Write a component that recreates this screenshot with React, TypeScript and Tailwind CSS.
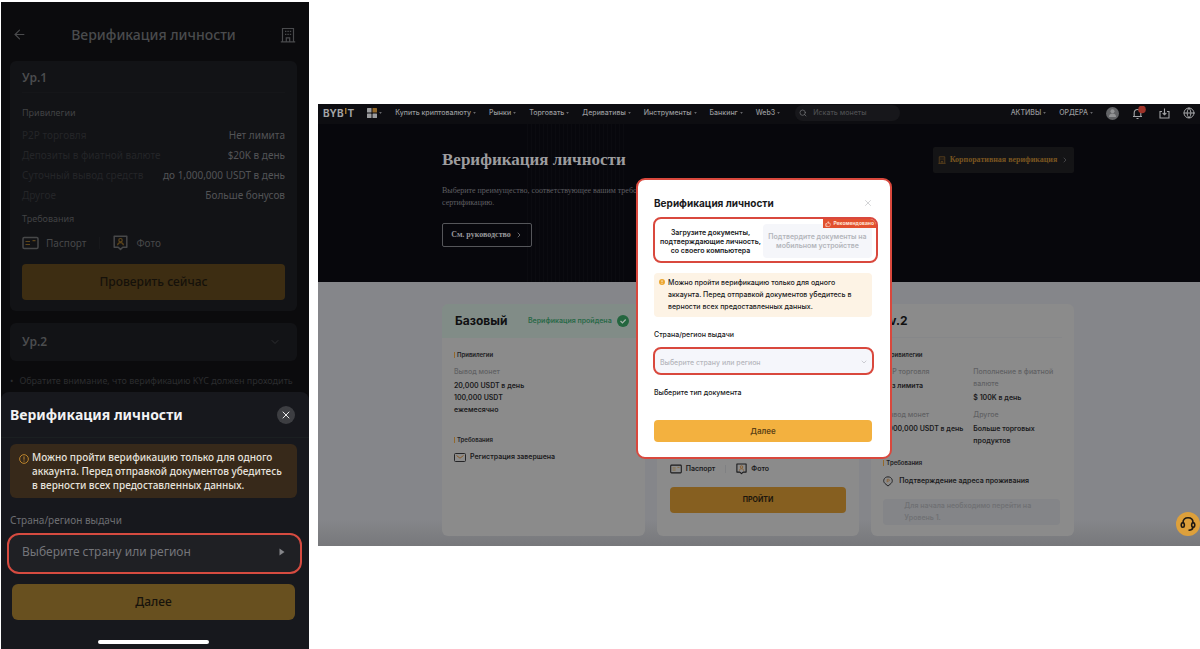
import type { ReactNode } from "react";
import { ArrowLeft, ChevronDown, ChevronRight, Globe, Search, ThumbsUp, X } from "lucide-react";

function BuildingIcon({ className }: { className: string }) {
  return (
    <svg viewBox="0 0 16 16" className={className} fill="none" stroke="currentColor" strokeWidth="1.2">
      <path d="M2.5 14.5V1.5h11v13M.8 14.8h14.4M6.3 14.5v-3.6h3.4v3.6" />
      <path d="M5 4.4h1.4M7.4 4.4h1.4M9.8 4.4h1.4M5 7.4h1.4M7.4 7.4h1.4M9.8 7.4h1.4" />
    </svg>
  );
}

function PassportIcon({ className, accent }: { className: string; accent: string }) {
  return (
    <svg viewBox="0 0 17 13" className={className} fill="none" stroke="currentColor" strokeWidth="1.5">
      <rect x="1" y="1" width="15" height="11" rx="1.2" />
      <path d="M3.5 5h4.5M3.5 8h4.5M10.5 4.2h3" stroke={accent} strokeWidth="1.2" />
    </svg>
  );
}

function PhotoIcon({ className, accent }: { className: string; accent: string }) {
  return (
    <svg viewBox="0 0 15 16" className={className} fill="none" stroke="currentColor" strokeWidth="1.5">
      <path d="M1.2 1.2h12.6v11H9.8L7.5 14.4 5.2 12.2h-4z" strokeLinejoin="round" />
      <circle cx="7.5" cy="5.2" r="1.7" stroke={accent} strokeWidth="1.2" />
      <path d="M4.6 10.2c.2-1.8 1.3-2.6 2.9-2.6s2.7.8 2.9 2.6" stroke={accent} strokeWidth="1.2" />
    </svg>
  );
}

const privileges = [
  ["P2P торговля", "Нет лимита"],
  ["Депозиты в фиатной валюте", "$20K в день"],
  ["Суточный вывод средств", "до 1,000,000 USDT в день"],
  ["Другое", "Больше бонусов"],
];

function Phone() {
  return (
    <section className="mt-0.5 ml-px flex w-[308px] shrink-0 flex-col bg-[#0b0b0d] font-['Noto_Sans','Open_Sans',sans-serif]">
      <header className="flex h-[59px] items-center justify-between pt-1.5 pr-[13px] pl-[11px] text-[#4a4b4d]">
        <button aria-label="Назад">
          <ArrowLeft className="size-[15px]" strokeWidth={1.8} />
        </button>
        <h1 className="text-sm font-medium">Верификация личности</h1>
        <button aria-label="Организация">
          <BuildingIcon className="size-4" />
        </button>
      </header>

      <div className="mr-3 ml-[9px] rounded-md bg-[#121316] px-3 pb-[11px]">
        <h2 className="flex h-8 items-center border-b border-[#151619] pt-0.5 text-xs font-semibold text-[#4b4c4e]">Ур.1</h2>
        <h3 className="mt-3 text-[9px] leading-4 text-[#414244]">Привилегии</h3>
        <dl className="mt-1 text-[10px] leading-5">
          {privileges.map(([name, value]) => (
            <div key={name} className="flex justify-between whitespace-nowrap">
              <dt className="text-[#242528]">{name}</dt>
              <dd className="text-[#535456]">{value}</dd>
            </div>
          ))}
        </dl>
        <h3 className="mt-1.5 text-[9px] leading-4 text-[#414244]">Требования</h3>
        <div className="mt-2 flex h-4 items-center text-[10px] text-[#474849]">
          <PassportIcon className="mr-[7px] h-3.5 w-[17px]" accent="#5f461a" />
          Паспорт
          <span className="mx-[13px] h-3 w-px bg-[#17181b]" />
          <PhotoIcon className="mr-2 h-4 w-[15px]" accent="#5f461a" />
          Фото
        </div>
        <button className="mt-[13px] h-9 w-full rounded-sm bg-[#3d2d12] text-xs font-medium text-[#15110a]">
          Проверить сейчас
        </button>
      </div>

      <button className="mt-3 mr-3 ml-[9px] flex h-[38px] items-center justify-between rounded-md bg-[#121316] px-3 text-xs font-semibold text-[#4b4c4e]">
        Ур.2
        <ChevronDown className="mr-1 size-3 text-[#2c2d30]" />
      </button>

      <p className="mr-3 ml-[9px] mt-3 h-[19px] text-[9px] leading-4 whitespace-nowrap text-[#2c2d2f]">
        <span className="mr-1.5">•</span>
        Обратите внимание, что верификацию KYC должен проходить
      </p>

      <div role="dialog" aria-labelledby="sheet-title" className="flex flex-1 flex-col rounded-t-lg bg-[#17181d] pr-3 pl-[9px]">
        <div className="-mr-3 -ml-[9px] flex h-[46px] items-center justify-between border-b border-[#1b1f21] pr-3.5 pl-[9px]">
          <h2 id="sheet-title" className="text-sm font-bold text-[#f2f2f3]">
            Верификация личности
          </h2>
          <button aria-label="Закрыть" className="grid size-[18px] place-items-center rounded-full bg-[#3d3e42] text-white">
            <X className="size-3" strokeWidth={1.8} />
          </button>
        </div>
        <div className="mt-1.5 flex rounded-md bg-[#37291a] py-1.5 pr-2 pl-[9px]">
          <svg viewBox="0 0 11 11" className="mt-1 mr-[3px] size-2.5 shrink-0" fill="none" stroke="#c98d2f">
            <circle cx="5.5" cy="5.5" r="4.8" />
            <path d="M5.5 2.6v3.7M5.5 7.2v1.2" />
          </svg>
          <p className="text-[10px] leading-[14px] font-medium whitespace-nowrap text-[#e6e2dd]">
            Можно пройти верификацию только для одного
            <br />
            аккаунта. Перед отправкой документов убедитесь
            <br />в верности всех предоставленных данных.
          </p>
        </div>
        <label htmlFor="phone-country" className="mt-3.5 text-[10px] leading-4 text-[#6d6e72]">
          Страна/регион выдачи
        </label>
        <div className="-mr-[5px] -ml-[3px] mt-[5px] grid grid-cols-[1fr_auto] items-center rounded-xl border-2 border-[#d64b40] bg-[#1f2024]">
          <select
            id="phone-country"
            className="col-span-2 col-start-1 row-start-1 h-[37px] w-full appearance-none rounded-xl bg-transparent px-[13px] pb-1 text-xs text-[#74757a]"
          >
            <option>Выберите страну или регион</option>
          </select>
          <svg viewBox="0 0 6 8" className="pointer-events-none col-start-2 row-start-1 mr-[15px] mb-1 h-2 w-1.5" fill="#85868a">
            <path d="M.5.5 5.5 4 .5 7.5z" />
          </svg>
        </div>
        <button className="mt-2.5 mr-0.5 ml-0.5 h-9 rounded-md bg-[#68501f] text-xs font-medium text-[#17130b]">Далее</button>
        <div className="mx-auto mt-5 mb-[5px] h-1 w-[111px] rounded-full bg-white" />
      </div>
    </section>
  );
}

function Caret() {
  return (
    <svg viewBox="0 0 4 3" className="ml-0.5 h-0.5 w-[3px]" fill="#66676b">
      <path d="M0 0h4L2 3z" />
    </svg>
  );
}

function NavLink({ children }: { children: ReactNode }) {
  return (
    <a href="#" className="flex items-center whitespace-nowrap">
      {children}
      <Caret />
    </a>
  );
}

function TopBar() {
  return (
    <header className="flex h-5 items-center bg-[#0d0d11] pr-[5px] pb-0.5 pl-[5px] text-[7px] font-medium text-[#98999c]">
      <a href="#" aria-label="Bybit" className="flex items-center text-[10px] leading-none font-bold text-[#a3a4a6]">
        BYB
        <svg viewBox="0 0 2 10" className="mx-px h-2.5 w-0.5" fill="#a3762b">
          <path d="M0 0h1.5v6H0z" />
        </svg>
        T
      </a>
      <button aria-label="Продукты" className="ml-[13px] flex items-center">
        <svg viewBox="0 0 10 10" className="size-2.5" fill="#9b9c9e">
          <rect width="4.5" height="4.5" rx=".5" />
          <rect x="5.5" width="4.5" height="4.5" rx=".5" fill="#94692a" />
          <rect y="5.5" width="4.5" height="4.5" rx=".5" />
          <rect x="5.5" y="5.5" width="4.5" height="4.5" rx=".5" />
        </svg>
        <Caret />
      </button>
      <nav className="ml-[13px] flex gap-[13px]">
        <NavLink>Купить криптовалюту</NavLink>
        <NavLink>Рынки</NavLink>
        <NavLink>Торговать</NavLink>
        <NavLink>Деривативы</NavLink>
        <NavLink>Инструменты</NavLink>
        <NavLink>Банкинг</NavLink>
        <NavLink>Web3</NavLink>
      </nav>
      <label className="ml-[15px] flex h-4 w-[105px] items-center gap-1.5 rounded-full bg-[#17171b] pl-1">
        <Search className="size-2 text-[#77787b]" />
        <input
          aria-label="Поиск"
          placeholder="Искать монеты"
          className="w-20 bg-transparent text-[7px] outline-none placeholder:text-[#4c4d50]"
        />
      </label>
      <div className="ml-auto flex items-center gap-[13px]">
        <NavLink>АКТИВЫ</NavLink>
        <NavLink>ОРДЕРА</NavLink>
        <button aria-label="Профиль">
          <svg viewBox="0 0 13 13" className="size-[13px]">
            <circle cx="6.5" cy="6.5" r="6.5" fill="#626366" />
            <circle cx="6.5" cy="4.3" r="2" fill="#929395" />
            <path d="M3 10c0-2.3 1-3.6 3.5-3.6S10 7.7 10 10z" fill="#929395" />
          </svg>
        </button>
        <button aria-label="Уведомления">
          <svg viewBox="0 0 14 14" className="size-3.5" fill="none" stroke="#a3a4a6" strokeWidth="1.1">
            <path d="M1 10.5h9M2.2 10.5V7c0-2.2 1.3-3.5 3.3-3.5S8.8 4.8 8.8 7v3.5M4.5 12.5h2" />
            <circle cx="10" cy="3.4" r="3.8" fill="#9e3329" stroke="none" />
          </svg>
        </button>
        <button aria-label="Скачать">
          <svg viewBox="0 0 11 11" className="size-[11px]" fill="none" stroke="#a3a4a6" strokeWidth="1.1">
            <path d="M3 3.5H1V10h9V3.5H8M5.5.5v6M3.7 5l1.8 1.8L7.3 5" />
          </svg>
        </button>
        <button aria-label="Язык">
          <Globe className="size-3 text-[#a3a4a6]" />
        </button>
      </div>
    </header>
  );
}

function Hero() {
  return (
    <div className="flex h-[158px] justify-center bg-[#07070c] bg-[repeating-linear-gradient(90deg,transparent_0_3px,#0b0b10_3px_4px)] bg-[length:100px_100%] bg-[position:206px_0] bg-no-repeat pr-0.5 font-['Liberation_Serif',serif]">
      <div className="flex w-[632px] items-start justify-between">
        <div className="pt-[26px]">
          <h1 className="text-[17px] leading-5 font-bold text-[#9d9d9f]">Верификация личности</h1>
          <p className="mt-[15px] text-[8px] leading-3 whitespace-nowrap text-[#5f5f63]">
            Выберите преимущество, соответствующее вашим требованиям, и пройдите
            <br />
            сертификацию.
          </p>
          <button className="mt-3.5 flex h-6 w-[90px] items-center justify-center gap-1 rounded-xs border border-[#55565a] text-[8px] font-bold text-[#98989b]">
            См. руководство
            <ChevronRight className="size-2" />
          </button>
        </div>
        <button className="mt-[23px] flex h-[26px] w-[141px] items-center justify-center gap-1 rounded-xs bg-[#141416] text-[8px] font-bold whitespace-nowrap text-[#795420]">
          <BuildingIcon className="size-2" />
          Корпоративная верификация
          <ChevronRight className="size-2 text-[#5a5b5e]" />
        </button>
      </div>
    </div>
  );
}

function CardHeading({ children }: { children: ReactNode }) {
  return (
    <h3 className="flex items-center gap-0.5 text-[6px] leading-3 font-semibold text-[#202022]">
      <span className="h-1.5 w-px bg-[#94692a]" />
      {children}
    </h3>
  );
}

function Fact({ name, children }: { name: string; children: ReactNode }) {
  return (
    <div>
      <dt className="font-medium text-[#606163]">{name}</dt>
      <dd className="mt-0.5 whitespace-nowrap">{children}</dd>
    </div>
  );
}

function Levels() {
  return (
    <div className="flex flex-1 justify-center bg-[linear-gradient(#85868a_90%,#77787b)] pt-[22px] pr-0.5 pb-2.5 text-[7px] text-[#1b1b1d]">
      <div className="grid w-[632px] grid-cols-3 gap-3">
        <article className="overflow-hidden rounded-md bg-[#8b8b8b]">
          <div className="flex h-[34px] items-center bg-[#818c87] pl-[13px]">
            <h2 className="text-xs font-bold text-[#101012]">Базовый</h2>
            <span className="ml-auto text-[7px] font-semibold text-[#2a6947]">Верификация пройдена</span>
            <svg viewBox="0 0 12 12" className="mr-4 ml-[5px] size-3">
              <circle cx="6" cy="6" r="6" fill="#24663f" />
              <path d="m3.5 6 2 1.9 3.2-3.4" fill="none" stroke="#a6b5ac" strokeWidth="1.3" />
            </svg>
          </div>
          <div className="px-3 pt-[11px]">
            <CardHeading>Привилегии</CardHeading>
            <dl className="mt-[5px] leading-3 font-semibold">
              <Fact name="Вывод монет">
                20,000 USDT в день
                <br />
                100,000 USDT
                <br />
                ежемесячно
              </Fact>
            </dl>
            <div className="mt-[18px]">
              <CardHeading>Требования</CardHeading>
            </div>
            <p className="mt-[5px] flex items-center gap-1 leading-3 font-semibold">
              <svg viewBox="0 0 12 9" className="h-[9px] w-3" fill="none" stroke="#252527">
                <rect x=".5" y=".5" width="11" height="8" rx="1" />
                <path d="m2.5 2.5 3.5 2.7 3.5-2.7" stroke="#8a5b27" />
              </svg>
              Регистрация завершена
            </p>
          </div>
        </article>

        <article className="flex flex-col justify-end rounded-md bg-[#8b8b8b] px-[13px] pb-[23px]">
          <p className="flex items-center font-semibold">
            <PassportIcon className="mr-1 h-2.5 w-3" accent="#8a6a36" />
            Паспорт
            <span className="mx-2.5 h-2 w-px bg-[#808183]" />
            <PhotoIcon className="mr-1 h-3 w-[11px]" accent="#8a5b27" />
            Фото
          </p>
          <button className="mt-3 h-[26px] rounded-sm bg-[#865f20] text-[7px] font-bold text-[#1c160c]">ПРОЙТИ</button>
        </article>

        <article className="rounded-md bg-[#8b8b8b] px-3">
          <h2 className="flex h-[34px] items-center border-b border-[#868789] text-xs font-bold text-[#101012]">Lv.2</h2>
          <div className="pt-[11px]">
            <CardHeading>Привилегии</CardHeading>
            <dl className="mt-[5px] grid grid-cols-[90px_1fr] gap-y-[5px] leading-3 font-semibold">
              <Fact name="P2P торговля">Без лимита</Fact>
              <Fact name="Пополнение в фиатной валюте">$ 100K в день</Fact>
              <Fact name="Вывод монет">1,000,000 USDT в день</Fact>
              <Fact name="Другое">
                Больше торговых
                <br />
                продуктов
              </Fact>
            </dl>
            <div className="mt-2.5">
              <CardHeading>Требования</CardHeading>
            </div>
            <p className="mt-1.5 flex items-center gap-1.5 leading-3 font-semibold">
              <svg viewBox="0 0 11 12" className="h-[11px] w-2.5" fill="none" stroke="#252527" strokeWidth="1.1">
                <path d="M5.5 11 2 8C.7 6.6.6 5.4.9 4.2 1.5 2 3.3.9 5.5.9s4 1.1 4.6 3.3c.3 1.2.2 2.400-1.100 3.800z" />
                <path d="M4.6 6.8V3.6h1.5c1.3 0 1.3 1.9 0 1.9H4.6" stroke="#8a5b27" strokeWidth=".8" />
              </svg>
              Подтверждение адреса проживания
            </p>
            <button
              disabled
              className="mt-3 h-[26px] w-[177px] rounded-sm bg-[#848588] pl-[21px] text-left text-[7px] leading-3 font-semibold text-[#707174]"
            >
              Для начала необходимо перейти на
              <br />
              Уровень 1.
            </button>
          </div>
        </article>
      </div>
    </div>
  );
}

function Modal() {
  return (
    <div
      role="dialog"
      aria-labelledby="modal-title"
      className="absolute top-[74px] left-[318px] w-[256px] rounded-[9px] border-2 border-[#d9483d] bg-white pt-3.5 pr-[18px] pb-[15px] pl-4 text-[#18191b]"
    >
      <div className="flex h-[18px] items-center justify-between">
        <h2 id="modal-title" className="text-[10px] font-bold">
          Верификация личности
        </h2>
        <button aria-label="Закрыть" className="-mr-px text-[#b9babd]">
          <X className="size-2.5" strokeWidth={1.5} />
        </button>
      </div>
      <div role="tablist" className="relative -mr-1.5 -ml-px mt-[5px] flex h-[46px] rounded-lg border-2 border-[#d9483d] pt-[5px] pr-1 pb-[3px] pl-[3px]">
        <button role="tab" aria-selected="true" className="w-[105px] text-[7px] leading-[9px] font-semibold whitespace-nowrap">
          Загрузите документы,
          <br />
          подтверждающие личность,
          <br />
          со своего компьютера
        </button>
        <button role="tab" aria-selected="false" className="flex-1 rounded-sm bg-[#f5f6fa] text-[7px] leading-[9px] font-semibold whitespace-nowrap text-[#b3b5ba]">
          Подтвердите документы на
          <br />
          мобильном устройстве
        </button>
        <span className="absolute top-0 right-0 flex h-[9px] items-center gap-0.5 rounded-tr-md bg-[#e2502f] px-0.5 text-[5px] font-bold text-[#ffe6d8]">
          <ThumbsUp className="size-1.5" />
          Рекомендовано
        </span>
      </div>
      <div className="mt-2.5 flex rounded-sm bg-[#fdf3e5] py-1 pl-[5px]">
        <svg viewBox="0 0 6 6" className="mt-0.5 mr-[3px] size-1.5 shrink-0">
          <circle cx="3" cy="3" r="3" fill="#eba52f" />
          <path d="M3 1.3v2M3 4v.8" stroke="#fff" strokeWidth=".8" />
        </svg>
        <p className="text-[7px] leading-3 font-medium whitespace-nowrap">
          Можно пройти верификацию только для одного
          <br />
          аккаунта. Перед отправкой документов убедитесь в
          <br />
          верности всех предоставленных данных.
        </p>
      </div>
      <label htmlFor="modal-country" className="mt-3 block text-[7px] leading-3 font-medium">
        Страна/регион выдачи
      </label>
      <div className="-mr-0.5 -ml-px mt-1.5 grid grid-cols-[1fr_auto] items-center rounded-lg border-2 border-[#d9483d] bg-[#f5f6fb]">
        <select
          id="modal-country"
          className="col-span-2 col-start-1 row-start-1 h-6 w-full appearance-none rounded-lg bg-transparent px-[5px] pt-1 text-[7px] font-medium text-[#b5b7bd]"
        >
          <option>Выберите страну или регион</option>
        </select>
        <ChevronDown className="pointer-events-none col-start-2 row-start-1 mt-0.5 mr-1 size-2 text-[#b5b7bd]" />
      </div>
      <p className="mt-3 text-[7px] leading-3 font-medium">Выберите тип документа</p>
      <button className="mt-[21px] h-[22px] w-full rounded-sm bg-[#f3b13f] text-[8px] font-semibold text-[#5d4316]">Далее</button>
    </div>
  );
}

export default function App() {
  return (
    <main className="flex min-h-screen items-stretch bg-white">
      <Phone />
      <section className="relative mt-[104px] mb-[103px] ml-[9px] flex min-w-0 flex-1 flex-col font-['Inter',sans-serif]">
        <TopBar />
        <Hero />
        <Levels />
        <Modal />
        <button
          aria-label="Поддержка"
          className="absolute right-0 bottom-2.5 grid size-6 place-items-center rounded-full bg-[#dda03b]"
        >
          <svg viewBox="0 0 16 16" className="size-4" fill="none" stroke="#1d1812" strokeWidth="1.6">
            <path d="M3 7.5v-1C3 3.5 5 1.8 8 1.8s5 1.7 5 4.7v1M13 10.5c0 2.500-1.500 3.800-4.500 3.800" />
            <rect x="1.3" y="6.8" width="3" height="4.4" rx="1.4" />
            <rect x="11.7" y="6.8" width="3" height="4.4" rx="1.4" />
          </svg>
        </button>
      </section>
    </main>
  );
}
